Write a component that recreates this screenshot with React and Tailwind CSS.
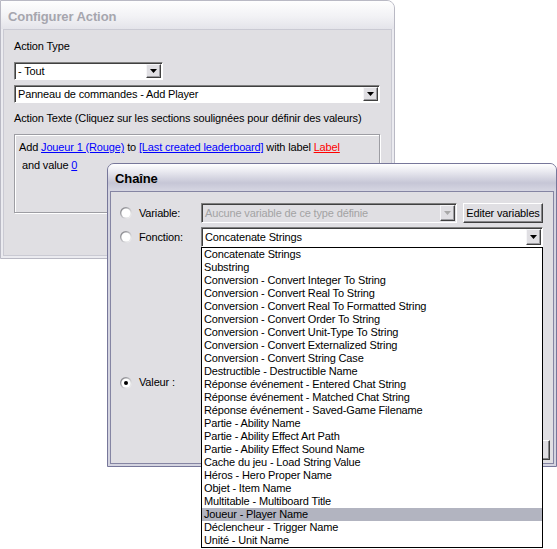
import React from 'react';

const functions = [
  'Concatenate Strings',
  'Substring',
  'Conversion - Convert Integer To String',
  'Conversion - Convert Real To String',
  'Conversion - Convert Real To Formatted String',
  'Conversion - Convert Order To String',
  'Conversion - Convert Unit-Type To String',
  'Conversion - Convert Externalized String',
  'Conversion - Convert String Case',
  'Destructible - Destructible Name',
  'Réponse événement - Entered Chat String',
  'Réponse événement - Matched Chat String',
  'Réponse événement - Saved-Game Filename',
  'Partie - Ability Name',
  'Partie - Ability Effect Art Path',
  'Partie - Ability Effect Sound Name',
  'Cache du jeu - Load String Value',
  'Héros - Hero Proper Name',
  'Objet - Item Name',
  'Multitable - Multiboard Title',
  'Joueur - Player Name',
  'Déclencheur - Trigger Name',
  'Unité - Unit Name',
];

const SELECTED = 'Joueur - Player Name';

function ArrowButton({ disabled }) {
  return (
    <div className="w-[15px] shrink-0 flex items-center justify-center bg-[#e0dfe3] border border-t-[#f6f6f8] border-l-[#f6f6f8] border-b-[#404040] border-r-[#404040] shadow-[inset_-1px_-1px_0_#9c9ca0]">
      <svg width="7" height="4" viewBox="0 0 7 4">
        <path d="M0 0h7L3.5 4z" fill={disabled ? '#a8a8a8' : '#000'} />
      </svg>
    </div>
  );
}

function Combo({ className, text, disabled, children }) {
  return (
    <div
      className={`relative flex p-[1px] border border-t-[#808080] border-l-[#808080] border-b-white border-r-white shadow-[inset_1px_1px_0_#404040] ${
        disabled ? 'bg-[#e0dfe3]' : 'bg-white'
      } ${className}`}
    >
      <div className={`flex-1 flex items-center pl-[2px] whitespace-nowrap overflow-hidden ${disabled ? 'text-[#a3a3a3]' : 'text-black'}`}>
        {text}
      </div>
      <ArrowButton disabled={disabled} />
      {children}
    </div>
  );
}

function Radio({ checked }) {
  return (
    <svg width="12" height="12" viewBox="0 0 12 12" className="shrink-0">
      <defs>
        <linearGradient id="radioRing" x1="0" y1="0" x2="1" y2="1">
          <stop offset="0" stopColor="#6f6f74" />
          <stop offset="0.55" stopColor="#c9c9cd" />
          <stop offset="1" stopColor="#ffffff" />
        </linearGradient>
      </defs>
      <circle cx="6" cy="6" r="6" fill="url(#radioRing)" />
      <circle cx="6" cy="6" r="4.6" fill="#fff" />
      {checked && <circle cx="6" cy="6" r="2" fill="#000" />}
    </svg>
  );
}

function XpButton({ className, children }) {
  return (
    <div className={`flex items-center justify-center bg-[#e0dfe3] border border-t-white border-l-white border-b-[#404040] border-r-[#404040] shadow-[inset_-1px_-1px_0_#868689] ${className}`}>
      {children}
    </div>
  );
}

function ConfigurerAction() {
  return (
    <div className="absolute left-0 top-0 w-[395px] h-[259px] rounded-tr-[8px] border border-[#b9b9c4] bg-[#ebebf0] px-[2px] pb-[2px] flex flex-col">
      <div className="h-[28px] -mx-[2px] rounded-tr-[7px] bg-[linear-gradient(to_bottom,#fefefe,#f2f2f5_55%,#e4e4ea)] flex items-center pl-[7px] pt-[3px] text-[13px] font-bold text-[#a6a6ae] tracking-[-0.1px]">
        Configurer Action
      </div>
      <div className="flex-1 border border-[#cacad3] bg-[#e0dfe3] pl-[10px] pt-[10px] flex flex-col">
        <div className="leading-[13px]">Action Type</div>
        <Combo className="mt-[9px] w-[149px] h-[18px]" text="- Tout" />
        <Combo className="mt-[5px] w-[366px] h-[18px]" text="Panneau de commandes - Add Player" />
        <div className="mt-[9px] leading-[13px]">Action Texte (Cliquez sur les sections soulignées pour définir des valeurs)</div>
        <div className="mt-[9px] w-[366px] h-[79px] border border-[#9d9da3] shadow-[inset_1px_1px_0_#fff,1px_1px_0_#fff] pt-[3px] leading-[18px]">
          <div className="pl-[4px] whitespace-nowrap">
            Add <span className="text-[#0000ff] underline">Joueur 1 (Rouge)</span> to{' '}
            <span className="text-[#0000ff] underline">[Last created leaderboard]</span> with label{' '}
            <span className="text-[#ff0000] underline">Label</span>
          </div>
          <div className="pl-[7px]">
            and value <span className="text-[#0000ff] underline">0</span>
          </div>
        </div>
      </div>
    </div>
  );
}

function Chaine() {
  return (
    <div className="absolute left-[107px] top-[163px] w-[450px] h-[304px] rounded-t-[7px] border border-[#77779a] bg-[#d4d4e0] px-[2px] pb-[2px] flex flex-col">
      <div className="h-[27px] -mx-[2px] rounded-t-[6px] bg-[linear-gradient(to_bottom,#ffffff,#ececf2_25%,#c6c6d6_70%,#d6d6e2)] flex items-center pl-[7px] pt-[2px] text-[13px] font-bold text-black tracking-[-0.1px]">
        Chaîne
      </div>
      <div className="flex-1 border border-[#8585a3] bg-[#e0dfe3] flex flex-col pt-[11px]">
        <div className="flex items-center h-[20px] pl-[9px]">
          <Radio />
          <div className="ml-[7px] w-[62px]">Variable:</div>
          <Combo className="w-[256px] h-[20px]" text="Aucune variable de ce type définie" disabled />
          <XpButton className="ml-[6px] w-[80px] h-[20px]">Editer variables</XpButton>
        </div>
        <div className="mt-[4px] flex items-center h-[20px] pl-[9px]">
          <Radio />
          <div className="ml-[7px] w-[62px]">Fonction:</div>
          <Combo className="w-[342px] h-[20px]" text="Concatenate Strings">
            <div className="absolute z-10 left-[-1px] top-[19px] w-[342px] border border-black bg-white">
              {functions.map((name) => (
                <div
                  key={name}
                  className={`h-[13px] leading-[13px] pl-[2px] whitespace-nowrap ${name === SELECTED ? 'bg-[#b2b4c0]' : ''}`}
                >
                  {name}
                </div>
              ))}
            </div>
          </Combo>
        </div>
        <div className="mt-[129px] flex items-center h-[13px] pl-[9px]">
          <Radio checked />
          <div className="ml-[7px]">Valeur :</div>
        </div>
        <div className="mt-[51px] flex justify-end pr-[3px]">
          <XpButton className="w-[75px] h-[20px]">OK</XpButton>
        </div>
      </div>
    </div>
  );
}

export default function App() {
  return (
    <div className="relative w-[557px] h-[549px] bg-white overflow-hidden text-[11px] text-black font-['Liberation_Sans',Arial,sans-serif] tracking-[-0.15px]">
      <ConfigurerAction />
      <Chaine />
    </div>
  );
}
